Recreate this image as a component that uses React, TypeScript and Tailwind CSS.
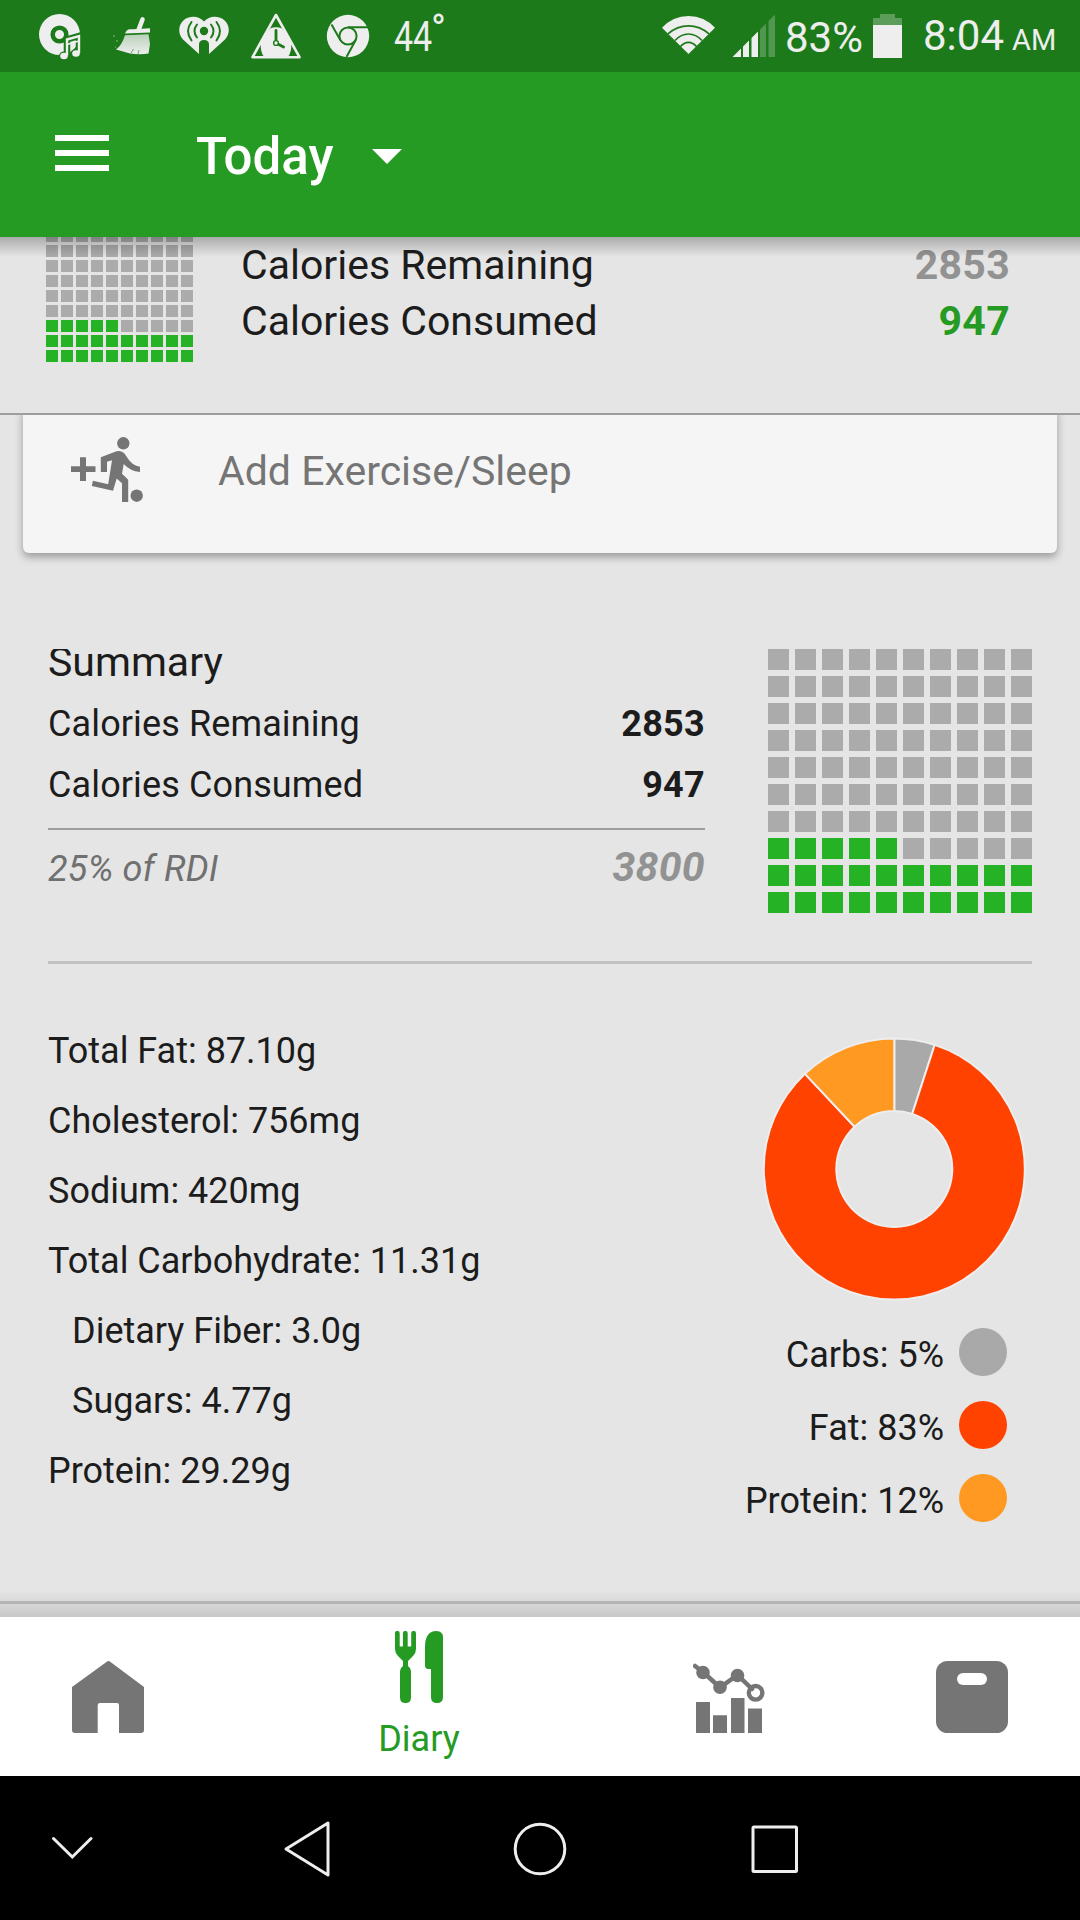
import type { ReactNode } from 'react';

const NUTRIENTS = [
  { label: 'Total Fat', value: '87.10g' },
  { label: 'Cholesterol', value: '756mg' },
  { label: 'Sodium', value: '420mg' },
  { label: 'Total Carbohydrate', value: '11.31g' },
  { label: 'Dietary Fiber', value: '3.0g', nested: true },
  { label: 'Sugars', value: '4.77g', nested: true },
  { label: 'Protein', value: '29.29g' },
];

const MACROS = [
  { label: 'Carbs', pct: 5, color: '#a9a9a9' },
  { label: 'Fat', pct: 83, color: '#ff4200' },
  { label: 'Protein', pct: 12, color: '#ff9922' },
];

interface IconProps {
  box: string;
  className: string;
  children: ReactNode;
}

function Icon({ box, className, children }: IconProps) {
  return (
    <svg viewBox={box} className={`shrink-0 ${className}`} fill="none">
      {children}
    </svg>
  );
}

function StatusBar() {
  const bar = '#1d7a1b';
  return (
    <div className="h-[72px] shrink-0 bg-[#1d7a1b] flex items-center text-[#eeeeee]">
      {/* music disc */}
      <Icon box="38 0 44 72" className="w-[44px] h-[72px] ml-[38px]">
        <circle cx="59.5" cy="34.5" r="20.5" fill="#eee" />
        <circle cx="59.5" cy="34.5" r="6.8" stroke={bar} strokeWidth="4.5" />
        <path d="M67 55V39.5L79 36V53" stroke={bar} strokeWidth="6.5" />
        <ellipse cx="64" cy="56" rx="5" ry="4.5" fill={bar} />
        <ellipse cx="76" cy="53.5" rx="5" ry="4.5" fill={bar} />
        <path d="M67 55.5V39.5L79 36V53" stroke="#eee" strokeWidth="2.4" />
        <path d="M67 44.5L79 41" stroke="#eee" strokeWidth="1.6" />
        <ellipse cx="64" cy="56" rx="3.8" ry="3.2" fill="#eee" />
        <ellipse cx="76" cy="53.5" rx="3.8" ry="3.2" fill="#eee" />
      </Icon>
      {/* cleaner broom */}
      <Icon box="110 0 44 72" className="w-[44px] h-[72px] ml-[28px]">
        <defs>
          <linearGradient id="broom" x1="0" y1="0" x2="0" y2="1">
            <stop offset="0" stopColor="#eee" stopOpacity="0.75" />
            <stop offset="1" stopColor="#eee" />
          </linearGradient>
        </defs>
        <path d="M142.5 19.5L138.5 30" stroke="#eee" strokeWidth="4.6" strokeLinecap="round" />
        <path d="M125 33.5C127 29 129 29.3 133 29.3L150 28.2V32.5Z" fill="#eee" />
        <path d="M125 35.2L148.5 34.2L150 44L148.5 53.5Q140 55 130 53.5L116 49.5Q122 45 125 35.2Z" fill="url(#broom)" />
        <path d="M131 53L133.5 49M138 54L139 50" stroke={bar} strokeWidth="0.6" />
        <path d="M113 36h2M116 41h2M115 47h1" stroke="#eee" strokeOpacity="0.25" strokeWidth="2" />
      </Icon>
      {/* radio heart */}
      <Icon box="178 0 52 72" className="w-[52px] h-[72px] ml-[24px]">
        <path d="M204 21.5C199 15.5 190 15.5 184.5 19.5C178 24.5 177.5 33.5 183 39.5L199 54V44.5Q199 40 204 40Q209 40 209 44.5V54L225 39.5C230.5 33.5 230 24.5 223.5 19.5C218 15.5 209 15.5 204 21.5Z" fill="#eee" />
        <circle cx="204" cy="31" r="4.2" fill={bar} />
        <path d="M197 24.5Q192 31 197 37.5M211 24.5Q216 31 211 37.5" stroke={bar} strokeWidth="2" strokeLinecap="round" />
        <path d="M191.5 22Q184.5 31 191.5 40.5M216.5 22Q223.5 31 216.5 40.5" stroke={bar} strokeWidth="2" strokeLinecap="round" />
      </Icon>
      {/* alarm triangle */}
      <Icon box="250 0 52 72" className="w-[52px] h-[72px] ml-[20px]">
        <path d="M264 57C260 51 260 44 262.5 39L270 28.5Q276 26 282 28.5L289.5 39C292 44 292 51 288 57Z" fill="#eee" />
        <path d="M276 15L252.5 57.2H299.5Z" stroke="#eee" strokeWidth="2.6" strokeLinejoin="round" />
        <path d="M276 30.5V43L283.5 47" stroke={bar} strokeWidth="2.8" strokeLinecap="round" />
        <circle cx="276" cy="43" r="2.4" fill="#eee" stroke={bar} strokeWidth="1.4" />
      </Icon>
      {/* browser */}
      <Icon box="326 0 44 72" className="w-[44px] h-[72px] ml-[24px]">
        <circle cx="348" cy="36" r="21.2" fill="#eee" />
        <circle cx="348" cy="36" r="8.6" stroke={bar} strokeWidth="2" />
        <path d="M348 27.2H368M340.3 40L331.5 24.5M355.7 40L346.5 57" stroke={bar} strokeWidth="2" />
      </Icon>
      <div className="ml-[24px] w-[65px] h-[72px] flex leading-[72px] whitespace-nowrap">
        <span className="w-[37px] text-[43px]">
          <span className="inline-block origin-left scale-x-[0.79]">44</span>
        </span>
        <span className="text-[40px] -mt-[6px]">°</span>
      </div>

      <Icon box="661 0 56 72" className="w-[56px] h-[72px] ml-auto">
        <path d="M688.5 54L662 27.7Q673 16 688.5 16Q704 16 715 27.7Z" fill="#eee" />
        <path d="M668 33.8Q677 25.8 688.5 25.8T709 33.8M675 40.5Q681 34 688.5 34T702 40.5M680.5 46.5Q684 42.3 688.5 42.3T696.5 46.5" stroke={bar} strokeWidth="1.7" />
      </Icon>
      <Icon box="731 0 46 72" className="w-[46px] h-[72px] ml-[14px]">
        <path d="M732.5 57L741 48.5V57ZM743 57V46.5L749 40.5V57ZM751.5 57V38L758 31.5V57Z" fill="#eee" />
        <path d="M760 57V29.5L766 23.5V57ZM768.5 57V21L775 14.5V57Z" fill="#eee" fillOpacity="0.25" />
      </Icon>
      <span className="ml-[8px] w-[80px] pt-[4px] leading-[76px] text-[42px] whitespace-nowrap">83%</span>
      <Icon box="872 0 32 72" className="w-[32px] h-[72px] ml-[7px]">
        <path d="M873 25V18H880V14H895V18H902V25Z" fill="#eee" fillOpacity="0.3" />
        <path d="M873 25H902V58H873Z" fill="#eee" />
      </Icon>
      <div className="ml-[19px] w-[157px] pt-[4px] flex items-baseline leading-[76px] whitespace-nowrap">
        <span className="text-[42px]">8:04</span>
        <span className="text-[29px] ml-[8px]">AM</span>
      </div>
    </div>
  );
}

function AppBar() {
  return (
    <div className="h-[165px] shrink-0 bg-[#259b24] flex items-center pl-[55px]">
      <div className="w-[54px] flex flex-col gap-[9px] -mt-[3px]">
        <span className="h-[6px] bg-white" />
        <span className="h-[6px] bg-white" />
        <span className="h-[6px] bg-white" />
      </div>
      <h1 className="ml-[87px] w-[176px] pt-[4px] text-[51px] leading-[60px] font-medium text-white">Today</h1>
      <Icon box="0 0 30 15" className="w-[30px] h-[15px] mt-[3px]">
        <path d="M0 0H30L15 15Z" fill="#fff" />
      </Icon>
    </div>
  );
}

// 10x10 waffle, filled from the bottom row up
function Waffle({ filled, className, cell }: { filled: number; className: string; cell: string }) {
  return (
    <div className={`grid grid-cols-10 shrink-0 ${className}`}>
      {Array.from({ length: 100 }, (_, i) => {
        const fromBottom = (9 - Math.floor(i / 10)) * 10 + (i % 10);
        return <span key={i} className={`${cell} ${fromBottom < filled ? 'bg-[#25b224]' : 'bg-[#ababab]'}`} />;
      })}
    </div>
  );
}

function StickyHeader() {
  return (
    <div className="relative h-[178px] shrink-0 overflow-hidden border-b-2 border-[#9e9e9e] flex pl-[46px] pr-[70px]">
      <Waffle filled={25} className="-mt-[22px] w-[147px] gap-[3px] self-start" cell="w-[12px] h-[12px]" />
      <div className="flex-1 ml-[48px] text-[41px] leading-[56px]">
        <div className="flex justify-between">
          <span>Calories Remaining</span>
          <span className="font-bold tracking-[0.3px] text-[#929292]">2853</span>
        </div>
        <div className="flex justify-between">
          <span>Calories Consumed</span>
          <span className="font-bold tracking-[0.3px] text-[#259b24]">947</span>
        </div>
      </div>
      <div className="absolute inset-x-0 top-0 h-[20px] bg-linear-to-b from-black/25 to-transparent" />
    </div>
  );
}

function ExerciseCard() {
  return (
    <div className="h-[234px] shrink-0 overflow-hidden px-[23px]">
      <div className="h-[146px] -mt-[8px] rounded-[6px] bg-[#f5f5f5] shadow-[0_4px_8px_rgba(0,0,0,0.33)] flex items-start pl-[48px] pt-[30px]">
        <Icon box="71 437 72 66" className="w-[72px] h-[66px]">
          <path d="M80 457.3H86V466.3H95.5V472H86V481H80V472H71V466.3H80Z" fill="#757575" />
          <circle cx="123.3" cy="443.3" r="6.2" fill="#757575" />
          <circle cx="136.7" cy="495.7" r="6.2" fill="#757575" />
          <path d="M100.8 457.3L116.5 451.3Q121.5 450 124.5 453.5L127.5 458Q132 465.5 140 466.7V472Q130 471 123.7 464L122 473.7L128.2 479.7V502H122V483.3L116.7 478.5L113 490.7L91.8 486L92.9 480.8L108.2 484.3L112 460.3L107 461.7V472H100.8Z" fill="#757575" />
        </Icon>
        <span className="ml-[75px] mt-[6px] text-[41px] leading-[56px] text-[#757575]">Add Exercise/Sleep</span>
      </div>
    </div>
  );
}

function Summary() {
  return (
    <section className="h-[315px] shrink-0 mx-[48px] overflow-hidden border-b-[3px] border-[#c1c1c1] flex justify-between">
      <div className="w-[657px] text-[36px] leading-[61px]">
        <h2 className="-mt-[17px] mb-px text-[41px]">Summary</h2>
        <div className="flex justify-between">
          <span className="tracking-[0.12px]">Calories Remaining</span>
          <span className="font-bold tracking-[0.3px]">2853</span>
        </div>
        <div className="flex justify-between">
          <span className="tracking-[0.12px]">Calories Consumed</span>
          <span className="font-bold tracking-[0.3px]">947</span>
        </div>
        <div className="mt-[12px] pt-[7px] border-t-2 border-[#9e9e9e] flex justify-between items-baseline italic">
          <span className="text-[#707070] tracking-[0.2px]">25% of RDI</span>
          <span className="text-[41px] font-bold tracking-[0.3px] text-[#929292]">3800</span>
        </div>
      </div>
      <Waffle filled={25} className="w-[264px] gap-[6px] self-start" cell="w-[21px] h-[21px]" />
    </section>
  );
}

function point(r: number, pct: number) {
  const a = (pct / 100) * Math.PI * 2;
  return `${(r * Math.sin(a)).toFixed(2)} ${(-r * Math.cos(a)).toFixed(2)}`;
}

function MacroDonut() {
  let start = 0;
  return (
    <Icon box="-132.3 -132 264 264" className="w-[264px] h-[264px]">
      {MACROS.map((m) => {
        const from = start;
        const to = start + m.pct;
        start = to;
        const large = m.pct > 50 ? 1 : 0;
        return (
          <path
            key={m.label}
            d={`M${point(130.5, from)}A130.5 130.5 0 ${large} 1 ${point(130.5, to)}L${point(58, to)}A58 58 0 ${large} 0 ${point(58, from)}Z`}
            fill={m.color}
            stroke="#eeeeee"
            strokeWidth="2"
          />
        );
      })}
    </Icon>
  );
}

function Nutrition() {
  return (
    <section className="h-[637px] shrink-0 pl-[48px] pr-[73px] flex justify-between text-[36px]">
      <ul className="pt-[52px] leading-[70px]">
        {NUTRIENTS.map((n) => (
          <li key={n.label} className={n.nested ? 'pl-[24px]' : ''}>
            {n.label}: {n.value}
          </li>
        ))}
      </ul>
      <div className="pt-[73px] flex flex-col items-end">
        <div className="-mr-[19px]">
          <MacroDonut />
        </div>
        <ul className="mt-[14px]">
          {MACROS.map((m) => (
            <li key={m.label} className="h-[73px] flex items-center justify-end gap-[15px]">
              <span className="leading-[48px] pt-[7px]">
                {m.label}: {m.pct}%
              </span>
              <span className="w-[48px] h-[48px] rounded-full" style={{ backgroundColor: m.color }} />
            </li>
          ))}
        </ul>
      </div>
    </section>
  );
}

function BottomTabs() {
  return (
    <nav className="h-[159px] shrink-0 bg-white flex items-start pl-[72px]">
      <Icon box="72 1661 72 72" className="w-[72px] h-[72px] mt-[44px]">
        <path d="M109.5 1661.3L144 1687V1730Q144 1733 141 1733H119V1705Q119 1703 117 1703H100Q97.7 1703 97.7 1705V1733H75Q72 1733 72 1730V1687L107.5 1661.3Q108.5 1660.7 109.5 1661.3Z" fill="#757575" />
      </Icon>
      <div className="ml-[215px] w-[120px] mt-[14px] flex flex-col items-center text-[#259b24]">
        <Icon box="395 1631 48 72" className="w-[48px] h-[72px]">
          <path d="M397.3 1633.3V1648M405.3 1633.3V1648M413.6 1633.3V1648" stroke="#259b24" strokeWidth="4.8" strokeLinecap="round" />
          <path d="M395 1646.5H416V1649Q416 1653 413 1656L408 1661V1666Q411 1668 411 1671V1697.5Q411 1703 405.5 1703T400 1697.5V1671Q400 1668 403 1666V1661L398 1656Q395 1653 395 1649Z" fill="#259b24" />
          <path d="M436.5 1631Q443 1631 443 1637.5V1697Q443 1703 437 1703T431 1697V1669H428.5Q425 1669 425 1665.5V1647Q425 1631 436.5 1631Z" fill="#259b24" />
        </Icon>
        <span className="text-[36px] leading-[48px] mt-[12px]">Diary</span>
      </div>
      <Icon box="693 1663 72 70" className="w-[72px] h-[70px] mt-[46px] ml-[214px]">
        <path d="M695 1666L703 1672L720 1687.5L737.5 1675L752 1689" stroke="#757575" strokeWidth="4.5" strokeLinecap="round" />
        <circle cx="703" cy="1672.5" r="6.8" fill="#757575" />
        <circle cx="720" cy="1687.3" r="6.8" fill="#757575" />
        <circle cx="737.5" cy="1675.5" r="6.8" fill="#757575" />
        <circle cx="755.6" cy="1692.8" r="6.8" stroke="#757575" strokeWidth="4.4" />
        <path d="M696 1702H710V1733H696ZM713 1715.3H727V1733H713ZM731 1698H744.5V1733H731ZM748 1708.5H762V1733H748Z" fill="#757575" />
      </Icon>
      <Icon box="936 1661 72 72" className="w-[72px] h-[72px] mt-[44px] ml-[171px]">
        <rect x="936" y="1661" width="72" height="72" rx="11.5" fill="#757575" />
        <rect x="957" y="1673" width="30" height="12" rx="6" fill="#fff" />
      </Icon>
    </nav>
  );
}

function SystemNav() {
  return (
    <div className="h-[144px] shrink-0 bg-black flex items-center">
      <Icon box="0 0 42 24" className="w-[42px] h-[24px] ml-[51px]">
        <path d="M2.5 2.5L21.3 21L40 2.5" stroke="#eee" strokeWidth="3" strokeLinecap="round" />
      </Icon>
      <Icon box="0 0 48 58" className="w-[48px] h-[58px] ml-[190px] mt-px">
        <path d="M45 3V55L3 29Z" stroke="#eee" strokeWidth="3" strokeLinejoin="round" />
      </Icon>
      <Icon box="0 0 54 54" className="w-[54px] h-[54px] ml-[182px] mt-px">
        <circle cx="27" cy="27" r="24.8" stroke="#eee" strokeWidth="3" />
      </Icon>
      <Icon box="0 0 48 48" className="w-[48px] h-[48px] ml-[184px] mt-px">
        <rect x="2" y="2" width="43.5" height="44.5" rx="1" stroke="#eee" strokeWidth="3" />
      </Icon>
    </div>
  );
}

export default function App() {
  return (
    <div className="w-[1080px] h-[1920px] overflow-hidden flex flex-col bg-[#e5e5e5] text-[#1c1c1c] font-[Roboto,sans-serif]">
      <StatusBar />
      <AppBar />
      <StickyHeader />
      <ExerciseCard />
      <Summary />
      <Nutrition />
      <div className="relative h-[16px] shrink-0 border-t-[3px] border-[#bfbfbf]">
        <div className="absolute inset-x-0 bottom-0 h-[26px] bg-linear-to-t from-black/13 to-transparent" />
      </div>
      <BottomTabs />
      <SystemNav />
    </div>
  );
}
